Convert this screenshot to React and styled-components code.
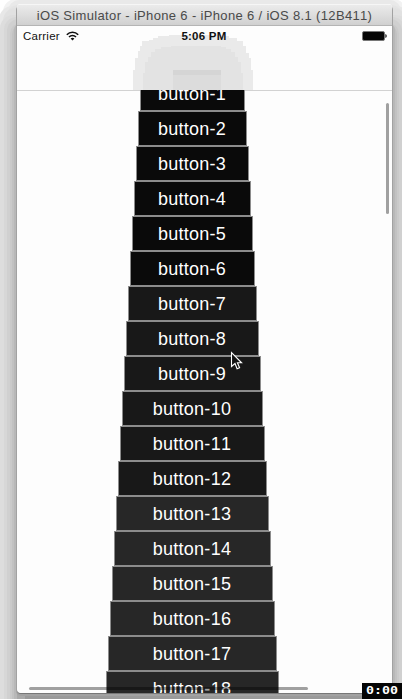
import React from 'react';
import styled, { createGlobalStyle } from 'styled-components';

const Global = createGlobalStyle`
  html, body { margin: 0; padding: 0; background: #fff; overflow: hidden; }
  * { box-sizing: border-box; }
`;

const Desktop = styled.div`
  position: relative;
  width: 402px;
  height: 699px;
  padding: 4px 10px 6px 17px;
  overflow: hidden;
  background: #fff;
  font-family: "Liberation Sans", Arial, sans-serif;
  font-kerning: none;
`;

const Window = styled.div`
  position: relative;
  display: flex;
  flex-direction: column;
  width: 375px;
  height: 689px;
  border-radius: 4px;
  overflow: hidden;
  background: #fdfdfd;
`;

const WindowShadow = styled.div`
  border-radius: 4px;
  width: 375px;
  height: 689px;
  box-shadow:
    0 1px 0 0 #777,
    0 2px 0 1px #a2a2a2,
    0 20px 0 -17px #8c8c8c,
    0 15px 0 -8px #9a9a9a,
    0 11px 0 0 #a9a9a9,
    0 22px 0 3px #b8b8b8,
    0 26px 0 5px #c2c2c2,
    0 26px 0 7px #cacaca,
    0 25px 0 10px #d0d0d0,
    0 26px 0 13px #d7d7d7,
    0 28px 0 17px #dddddd,
    0 18px 0 14px #e1e1e1,
    0 12px 0 11px #e4e4e4,
    0 20px 0 18px #e8e8e8,
    0 5px 0 9px #e9e9e9,
    0 9px 0 14px #f2f2f2;
`;

const TitleBar = styled.div`
  flex: none;
  height: 22px;
  display: flex;
  align-items: center;
  justify-content: center;
  background: linear-gradient(#ebebeb, #d0d0d0);
  border-top: 1px solid #f6f6f6;
  border-bottom: 1px solid #b4b4b4;
  color: #4a4a4a;
  font-size: 13px;
  letter-spacing: 0.34px;
  white-space: nowrap;
`;

const NavBar = styled.div`
  position: relative;
  flex: none;
  height: 64px;
`;

const StatusBar = styled.div`
  position: relative;
  display: grid;
  grid-template-columns: 1fr auto 1fr;
  align-items: center;
  height: 20px;
  padding: 0 5px 0 6px;
  font-size: 11.5px;
  color: #111;
`;

const Carrier = styled.div`
  display: flex;
  align-items: center;
  gap: 6px;
  letter-spacing: 0.25px;
`;

const Clock = styled.div`
  font-weight: bold;
  margin-right: 2px;
  letter-spacing: 0.25px;
`;

const BatterySlot = styled.div`
  display: flex;
  justify-content: flex-end;
`;

const Ghost = styled.svg`
  position: absolute;
  left: 116px;
  top: 9px;
`;

const ScrollArea = styled.div`
  position: relative;
  flex: 1;
  min-height: 0;
  overflow: hidden;
  box-shadow: inset 0 1px 0 #d2d2d2;
`;

const Stack = styled.div`
  display: flex;
  flex-direction: column;
  align-items: center;
  width: 351px;
  margin-top: -14px;
`;

const StackButton = styled.button`
  flex: none;
  display: block;
  width: ${(p) => p.$width}px;
  height: 35px;
  padding: 1px 1px 0 0;
  border: 1px solid #8c8c8c;
  background: ${(p) => p.$shade};
  color: #fff;
  font: 18px/32px "Liberation Sans", Arial, sans-serif;
  font-kerning: none;
  letter-spacing: 0.25px;
  text-align: center;
`;

const VerticalThumb = styled.div`
  position: absolute;
  right: 3px;
  top: 13px;
  width: 3px;
  height: 111px;
  border-radius: 2px;
  background: rgba(0, 0, 0, 0.37);
`;

const HorizontalThumb = styled.div`
  position: absolute;
  left: 12px;
  bottom: 3px;
  width: 279px;
  height: 3px;
  border-radius: 2px;
  background: rgba(0, 0, 0, 0.37);
`;

const Pointer = styled.svg`
  position: absolute;
  left: 230px;
  top: 351px;
`;

const Timer = styled.div`
  position: absolute;
  right: 0;
  bottom: 0;
  width: 40px;
  height: 16px;
  background: #050505;
  color: #fff;
  font: bold 10px/15px "DejaVu Sans Mono", monospace;
  text-align: center;
`;

const TimerText = styled.span`
  display: inline-block;
  transform: scaleX(1.33);
`;

const shadeFor = (n) => (n <= 6 ? '#0a0a0a' : n <= 12 ? '#181818' : '#272727');
const items = Array.from({ length: 18 }, (_, i) => i + 1);

function GhostTrace() {
  return (
    <Ghost width="120" height="55" viewBox="0 0 120 55" shapeRendering="crispEdges">
      <path fill="#eaeaea" d="M0 55V35H2V23H5V16H7V11H9V6H16V5H20V3H25V1H36V0H88V1H96V3H104V6H110V11H113V18H116V23H118V35H120V55Z" />
      <path fill="#e3e3e3" d="M10 55V38H12V27H15V22H18V17H22V14H28V12H38V11H88V12H93V14H98V17H102V22H105V27H108V38H110V55Z" />
      <path fill="#dcdcdc" d="M40 35H88V55H40Z" />
      <path fill="#d5d5d5" d="M40 35H88V40H40Z" />
    </Ghost>
  );
}

export default function App() {
  return (
    <>
      <Global />
      <Desktop>
        <WindowShadow>
          <Window>
            <TitleBar>iOS Simulator - iPhone 6 - iPhone 6 / iOS 8.1 (12B411)</TitleBar>
            <NavBar>
              <GhostTrace />
              <StatusBar>
                <Carrier>
                  Carrier
                  <svg width="13" height="10" viewBox="0 0 13 10" fill="none" stroke="#111" strokeWidth="1.6">
                    <path d="M.8 3.7a8 8 0 0 1 11.4 0" />
                    <path d="M3 6a5 5 0 0 1 7 0" />
                    <path d="M4.6 7.6a2.8 2.8 0 0 1 3.8 0L6.5 9.6z" fill="#111" stroke="none" />
                  </svg>
                </Carrier>
                <Clock>5:06 PM</Clock>
                <BatterySlot>
                  <svg width="25" height="10" viewBox="0 0 25 10">
                    <rect x=".5" y=".5" width="22" height="9" rx="1.5" fill="#050505" stroke="#777" />
                    <path d="M23.3 3v4q1.5-.5 1.5-2t-1.5-2" fill="#222" />
                  </svg>
                </BatterySlot>
              </StatusBar>
            </NavBar>
            <ScrollArea>
              <Stack>
                {items.map((n) => (
                  <StackButton key={n} $width={101 + 4 * n} $shade={shadeFor(n)}>
                    button-{n}
                  </StackButton>
                ))}
              </Stack>
              <VerticalThumb />
              <HorizontalThumb />
            </ScrollArea>
          </Window>
        </WindowShadow>
        <Pointer width="14" height="21" viewBox="0 0 14 21">
          <path d="M1.5 1.5V15.5L5 12.5 7.1 17.8 9.6 16.8 7.4 11.8H11.6z" fill="#111" stroke="#fff" strokeWidth="1.1" />
        </Pointer>
        <Timer>
          <TimerText>0:00</TimerText>
        </Timer>
      </Desktop>
    </>
  );
}
